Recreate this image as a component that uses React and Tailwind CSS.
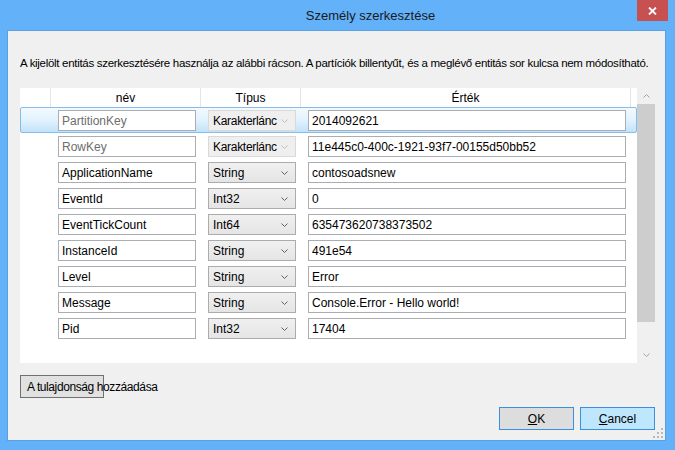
import React from "react";

const rows = [
  { name: "PartitionKey", type: "Karakterlánc", value: "2014092621", locked: true, selected: true },
  { name: "RowKey", type: "Karakterlánc", value: "11e445c0-400c-1921-93f7-00155d50bb52", locked: true },
  { name: "ApplicationName", type: "String", value: "contosoadsnew" },
  { name: "EventId", type: "Int32", value: "0" },
  { name: "EventTickCount", type: "Int64", value: "635473620738373502" },
  { name: "InstanceId", type: "String", value: "491e54" },
  { name: "Level", type: "String", value: "Error" },
  { name: "Message", type: "String", value: "Console.Error - Hello world!" },
  { name: "Pid", type: "Int32", value: "17404" },
];

function Chevron({ color, up }) {
  return (
    <svg width="7" height="4" viewBox="0 0 7 4" className="block shrink-0">
      <polyline
        points={up ? "0.5,3.5 3.5,0.5 6.5,3.5" : "0.5,0.5 3.5,3.5 6.5,0.5"}
        fill="none"
        stroke={color}
        strokeWidth="1"
      />
    </svg>
  );
}

function Row({ r }) {
  const rowCls = r.selected
    ? "h-[26px] flex items-start pt-[2px] pl-[37px] border border-[#84bdf0] rounded-[2px] bg-gradient-to-b from-[#f3f9fe] via-[#e2f2fd] to-[#c1e2f9]"
    : "h-[26px] flex items-start pt-[3px] pl-[38px]";
  return (
    <div className={rowCls}>
      <div
        className={`w-[138px] h-[21px] border border-[#abadb3] bg-white flex items-center pl-[3px] whitespace-nowrap overflow-hidden ${
          r.locked ? "text-[#6d6d6d]" : "text-black"
        }`}
      >
        {r.name}
      </div>
      {r.locked ? (
        <div className="ml-[12px] w-[88px] h-[21px] border border-[#d9d9d9] bg-[#efefef] flex items-center pl-[4px] pr-[7px] justify-between text-black">
          <span className="tracking-[-0.3px] whitespace-nowrap">{r.type}</span>
          <Chevron color="#c0c0c0" />
        </div>
      ) : (
        <div className="ml-[12px] w-[88px] h-[21px] border border-[#acacac] bg-gradient-to-b from-[#f0f0f0] to-[#e5e5e5] flex items-center pl-[4px] pr-[7px] justify-between text-black">
          <span>{r.type}</span>
          <Chevron color="#606060" />
        </div>
      )}
      <div className="ml-[12px] w-[318px] h-[21px] border border-[#abadb3] bg-white flex items-center pl-[3px] whitespace-nowrap overflow-hidden text-black">
        {r.value}
      </div>
    </div>
  );
}

export default function App() {
  return (
    <div className="w-[675px] h-[450px] bg-[#63b1f9] flex flex-col font-['Liberation_Sans',Arial,sans-serif] text-[12px] text-black overflow-hidden">
      {/* Title bar */}
      <div className="h-[30px] flex relative">
        <div className="flex-1 flex justify-center pl-[66px] pt-[8px] text-[13px] text-[#1a1a1a] leading-[16px]">
          Személy szerkesztése
        </div>
        <div className="absolute right-[7px] top-0 w-[31px] h-[21px] bg-[#c75050] flex items-center justify-center">
          <svg width="9" height="8" viewBox="0 0 9 8">
            <path d="M1 0.5 L8 7.5 M8 0.5 L1 7.5" stroke="#fff" strokeWidth="1.8" />
          </svg>
        </div>
      </div>

      {/* Client */}
      <div className="ml-[7px] w-[659px] h-[411px] border border-[#5c9fe0] bg-[#f0f0f0] flex flex-col pl-[12px] relative">
        <div className="mt-[24px] h-[16px] leading-[16px] whitespace-nowrap text-[11.5px] tracking-[-0.3px]">
          A kijelölt entitás szerkesztésére használja az alábbi rácson. A partíciók billentyűt, és a meglévő entitás sor kulcsa nem módosítható.
        </div>

        {/* Grid */}
        <div className="mt-[17px] w-[635px] h-[275px] flex">
          <div className="w-[617px] h-full bg-white flex flex-col">
            <div className="h-[19px] flex text-black">
              <div className="w-[31px] border-r border-[#e5e5e5]" />
              <div className="w-[150px] border-r border-[#e5e5e5] flex justify-center items-center">név</div>
              <div className="w-[100px] border-r border-[#e5e5e5] flex justify-center items-center">Típus</div>
              <div className="w-[330px] border-r border-[#e5e5e5] flex justify-center items-center">Érték</div>
            </div>
            {rows.map((r) => (
              <Row key={r.name} r={r} />
            ))}
          </div>
          <div className="w-[18px] h-full flex flex-col">
            <div className="h-[16px] flex items-center justify-center">
              <Chevron color="#a3a3a3" up />
            </div>
            <div className="h-[218px] bg-[#cdcdcd]" />
            <div className="flex-1" />
            <div className="h-[17px] flex items-center justify-center">
              <Chevron color="#a3a3a3" />
            </div>
          </div>
        </div>

        {/* Add property button */}
        <div className="mt-[12px] w-[84px] h-[23px] border border-[#707070] bg-[#e1e1e1] flex items-center pl-[6px] whitespace-nowrap overflow-visible tracking-[-0.4px]">
          A tulajdonság hozzáadása
        </div>

        {/* OK / Cancel */}
        <div className="mt-[9px] flex justify-end pr-[10px] gap-[6px]">
          <div className="w-[75px] h-[23px] border border-[#3c8fde] bg-[#dddddd] flex items-center justify-center">
            <span className="underline">O</span>K
          </div>
          <div className="w-[75px] h-[23px] border border-[#3c8fde] bg-[#bee6fd] flex items-center justify-center">
            <span className="underline">C</span>ancel
          </div>
        </div>

        {/* Resize grip */}
        <svg width="11" height="11" viewBox="0 0 11 11" className="absolute right-[1px] bottom-[1px]">
          <rect x="8" y="0" width="2" height="2" fill="#b8b8b8" />
          <rect x="4" y="4" width="2" height="2" fill="#b8b8b8" />
          <rect x="8" y="4" width="2" height="2" fill="#b8b8b8" />
          <rect x="0" y="8" width="2" height="2" fill="#b8b8b8" />
          <rect x="4" y="8" width="2" height="2" fill="#b8b8b8" />
          <rect x="8" y="8" width="2" height="2" fill="#b8b8b8" />
        </svg>
      </div>
    </div>
  );
}
